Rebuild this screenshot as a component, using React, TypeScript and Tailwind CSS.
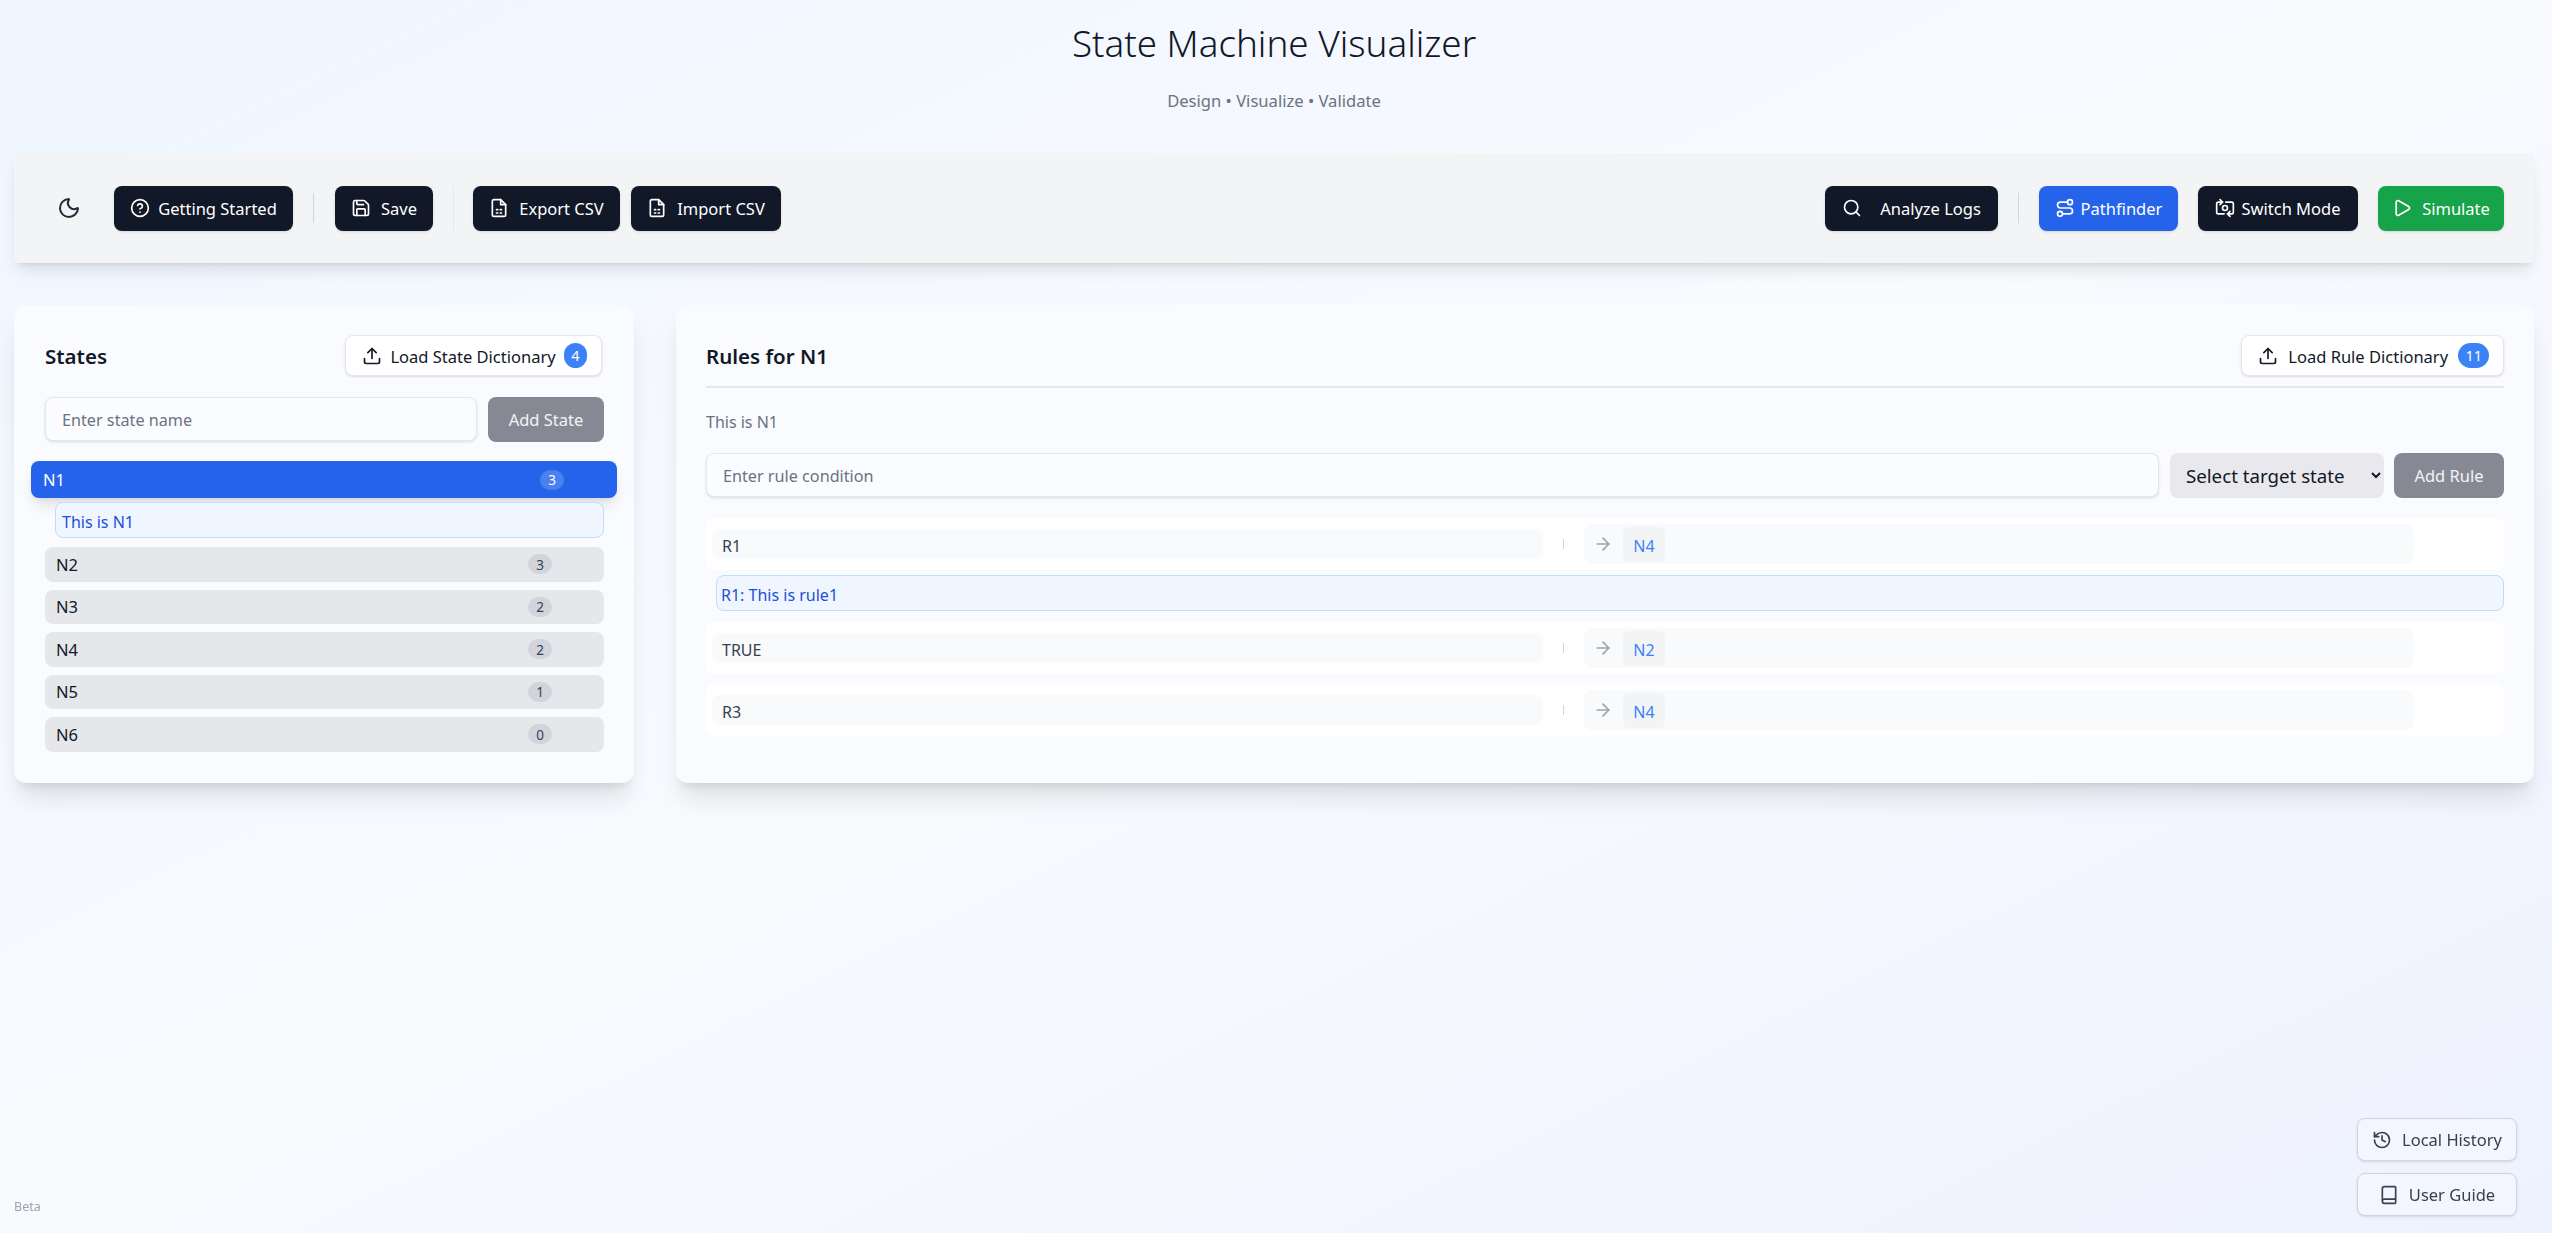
import {
  ArrowRight,
  Book,
  CircleHelp,
  History,
  Moon,
  Play,
  Route,
  Save,
  Search,
  SwitchCamera,
  Upload,
} from 'lucide-react';
import type { ReactNode } from 'react';

// File outline with a small 2x2 grid, lucide has no exact match
function CsvIcon() {
  return (
    <svg className="size-5" viewBox="0 0 24 24" fill="none" stroke="currentColor" strokeWidth={2} strokeLinecap="round" strokeLinejoin="round" aria-hidden="true">
      <path d="M14 2H6a2 2 0 0 0-2 2v16a2 2 0 0 0 2 2h12a2 2 0 0 0 2-2V8z" />
      <path d="M14 2v6h6" />
      <path d="M9 14h1.5M13.5 14H15M9 18h1.5M13.5 18H15" />
    </svg>
  );
}

function ToolButton({ icon, label, className, gap = 'gap-1.5' }: { icon: ReactNode; label: string; className: string; gap?: string }) {
  return (
    <button className={`flex h-[45px] items-center justify-center ${gap} rounded-lg text-[16.5px] text-white shadow-sm ${className}`}>
      {icon}
      <span className="pt-[3px]">{label}</span>
    </button>
  );
}

function LoadButton({ label, count, className }: { label: string; count: string; className: string }) {
  return (
    <button className={`flex h-[41px] items-center justify-between rounded-lg border border-[#e5e7eb] bg-white pl-4 pr-[14px] text-[16.5px] text-[#111827] shadow-sm ${className}`}>
      <Upload className="size-5" />
      <span className="pt-[3px]">{label}</span>
      <span className="flex h-[25px] min-w-[23px] items-center justify-center rounded-full bg-[#3b82f6] px-[7px] pt-px text-[14.5px] text-white">{count}</span>
    </button>
  );
}

function StateRow({ name, count }: { name: string; count: number }) {
  return (
    <div className="flex h-[34.5px] items-center rounded-lg bg-[#e5e7eb] pl-[11px] pr-[52px] text-[16.5px] text-[#111827]">
      <span className="flex-1 pt-[2px]">{name}</span>
      <span className="flex h-5 w-6 items-center justify-center rounded-full bg-[#d1d5db] pt-px text-[13.5px] text-[#374151]">{count}</span>
    </div>
  );
}

function RuleRow({ condition, target }: { condition: string; target: string }) {
  return (
    <div className="flex h-[52px] items-center rounded-lg bg-white pl-1.5 pr-[90px] text-[16px]">
      <div className="flex h-[30px] flex-1 items-center rounded-lg bg-[#f9fafb] px-[10px] pt-[3px] text-[#374151]">{condition}</div>
      <div className="mx-5 h-[10px] w-px bg-[#d1d5db]" />
      <div className="flex h-10 w-[830px] items-center rounded-lg bg-[#f9fafb] pl-[9px]">
        <ArrowRight className="size-5 text-[#9ca3af]" />
        <span className="ml-[10px] flex h-[35px] w-[42px] items-center justify-center rounded-md bg-[#f3f4f6] pt-[3px] text-[#3b82f6]">{target}</span>
      </div>
    </div>
  );
}

export default function App() {
  return (
    <div className="min-h-screen bg-gradient-to-br from-[#eff6ff] via-[#f9fafe] to-[#eef2ff] font-['Noto_Sans',sans-serif]">
      <header className="ml-[14px] mr-[18px] flex h-[153px] flex-col items-center pt-[16px]">
        <h1 className="text-[36.8px] font-light leading-[54px] text-[#111827]">State Machine Visualizer</h1>
        <p className="mt-[19px] text-[16.6px] text-[#6b7280]">Design • Visualize • Validate</p>
      </header>

      <div className="ml-[14px] mr-[18px] flex h-[110px] items-center rounded-sm bg-[#f3f4f6] pl-[43px] pr-[30px] shadow-lg">
        <Moon className="size-6 text-[#1f2937]" />
        <ToolButton icon={<CircleHelp className="size-5" />} label="Getting Started" className="ml-[33px] w-[179px] bg-[#111827]" gap="gap-2" />
        <div className="ml-5 mr-[21px] h-[30px] w-px bg-[#d1d5db]" />
        <ToolButton icon={<Save className="size-5" />} label="Save" className="w-[98px] bg-[#111827]" gap="gap-2.5" />
        <div className="ml-5 mr-[19px] h-[45px] w-px bg-[#e5e7eb]" />
        <ToolButton icon={<CsvIcon />} label="Export CSV" className="w-[147px] bg-[#111827]" gap="gap-[10px]" />
        <ToolButton icon={<CsvIcon />} label="Import CSV" className="ml-[11px] w-[150px] bg-[#111827]" gap="gap-[10px]" />
        <div className="flex-1" />
        <ToolButton icon={<Search className="size-5" />} label="Analyze Logs" className="w-[173px] bg-[#111827]" gap="gap-[18px]" />
        <div className="mx-5 h-[30px] w-px bg-[#d1d5db]" />
        <ToolButton icon={<Route className="size-5" />} label="Pathfinder" className="w-[139px] bg-[#2563eb]" />
        <ToolButton icon={<SwitchCamera className="size-5" />} label="Switch Mode" className="ml-5 w-[160px] bg-[#111827]" />
        <ToolButton icon={<Play className="size-5" />} label="Simulate" className="ml-5 w-[126px] bg-[#16a34a]" gap="gap-2.5" />
      </div>

      <main className="ml-[14px] mr-[18px] mt-[42px] grid grid-cols-[620px_1fr] gap-[42px]">
        <section className="h-[478px] rounded-xl bg-[#f9fbff] pl-[31px] pr-[30px] pt-[30px] shadow-xl">
          <div className="flex items-center justify-between">
            <h2 className="pt-[2px] text-[20.5px] font-semibold text-[#111827]">States</h2>
            <LoadButton label="Load State Dictionary" count="4" className="mr-[2px] w-[257px]" />
          </div>
          <div className="mt-[21px] flex h-[45px] gap-[11px]">
            <input readOnly placeholder="Enter state name" className="h-11 flex-1 rounded-lg border border-[#e5e7eb] bg-[#fbfcff] px-4 pt-[2px] text-[16.2px] shadow-sm placeholder:text-[#6b7280]" />
            <button className="w-[116px] rounded-lg bg-[#868994] pt-[2px] text-[16.5px] text-white/90">Add State</button>
          </div>
          <div className="-ml-[14px] -mr-[13px] mt-[19px] flex h-[37px] items-center rounded-lg bg-[#2563eb] pl-3 pr-[53px] text-[16.5px] text-white shadow-lg">
            <span className="flex-1 pt-[2px]">N1</span>
            <span className="flex h-5 w-6 items-center justify-center rounded-full bg-[#4c80f0] pt-px text-[13.5px]">3</span>
          </div>
          <div className="ml-[10px] mt-1 flex h-9 items-center rounded-lg border border-[#bfdbfe] bg-[#eff6ff] px-1.5 pt-[3px] text-[16px] text-[#1d4ed8]">This is N1</div>
          <div className="mt-[9px] flex flex-col gap-2">
            <StateRow name="N2" count={3} />
            <StateRow name="N3" count={2} />
            <StateRow name="N4" count={2} />
            <StateRow name="N5" count={1} />
            <StateRow name="N6" count={0} />
          </div>
        </section>

        <section className="rounded-xl bg-[#fafbfe] px-[30px] pt-[30px] shadow-xl">
          <div className="flex items-center justify-between border-b-2 border-[#e5e7eb] pb-[10px]">
            <h2 className="pt-[2px] text-[20.5px] font-semibold text-[#111827]">Rules for N1</h2>
            <LoadButton label="Load Rule Dictionary" count="11" className="w-[263px]" />
          </div>
          <p className="mt-6 text-[16px] leading-5 text-[#6b7280]">This is N1</p>
          <div className="mt-[21px] flex h-[45px] gap-[10px]">
            <input readOnly placeholder="Enter rule condition" className="mr-px h-11 flex-1 rounded-lg border border-[#e5e7eb] bg-[#fbfcff] px-4 pt-[2px] text-[16.2px] shadow-sm placeholder:text-[#6b7280]" />
            <select className="w-[214px] rounded-lg bg-[#e9e9ed] pl-3 pr-2 text-[18.7px] text-[#111827]">
              <option>Select target state</option>
            </select>
            <button className="w-[110px] rounded-lg bg-[#868994] pt-[2px] text-[16.5px] text-white/90">Add Rule</button>
          </div>
          <div className="mt-5">
            <RuleRow condition="R1" target="N4" />
            <div className="ml-[10px] mt-[5px] flex h-9 items-center rounded-lg border border-[#bfdbfe] bg-[#eff6ff] px-1 pt-[3px] text-[16px] text-[#1d4ed8]">R1: This is rule1</div>
            <div className="mt-[11px] flex flex-col gap-[10px]">
              <RuleRow condition="TRUE" target="N2" />
              <RuleRow condition="R3" target="N4" />
            </div>
          </div>
        </section>
      </main>

      <span className="fixed bottom-[16px] left-[14px] text-[12.5px] text-[#9ca3af]">Beta</span>
      <div className="fixed bottom-[17px] right-[35px] flex w-40 flex-col gap-3">
        <button className="flex h-[43px] items-center justify-center gap-[10px] rounded-lg border border-[#d1d5db] bg-[#f3f6fe] text-[16.5px] text-[#374151] shadow-sm">
          <History className="size-5" />
          <span className="pt-[2px]">Local History</span>
        </button>
        <button className="flex h-[43px] items-center justify-center gap-[10px] rounded-lg border border-[#d1d5db] bg-[#f3f6fe] text-[16.5px] text-[#374151] shadow-sm">
          <Book className="size-5" />
          <span className="pt-[2px]">User Guide</span>
        </button>
      </div>
    </div>
  );
}
